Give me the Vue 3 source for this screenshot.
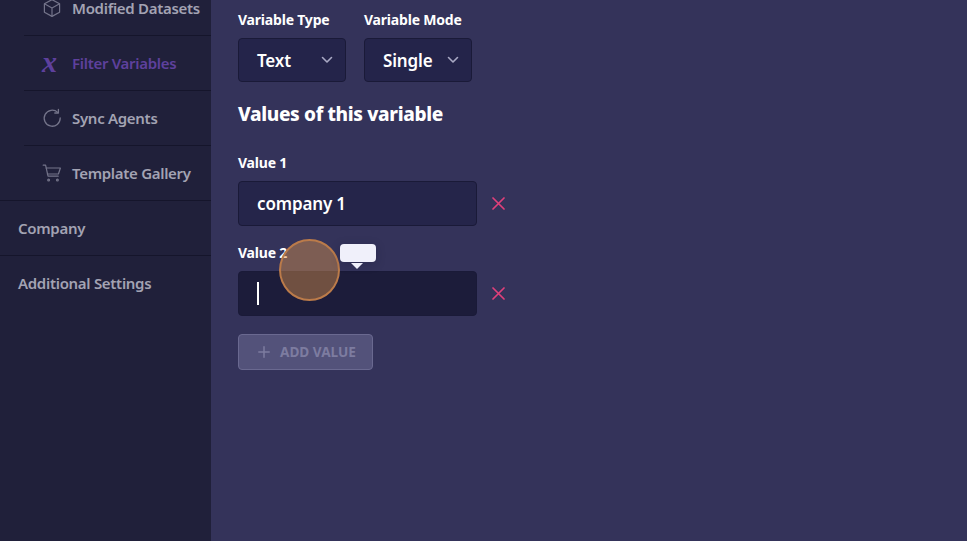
<template>
  <div class="page">
    <aside class="sidebar">
      <div class="sub-list">
        <div v-for="item in subItems" :key="item.label" class="sub-item" :class="{ active: item.active }">
          <span class="sub-icon">
            <span v-if="item.icon === 'x'" class="x-glyph">x</span>
            <svg v-else-if="item.icon === 'box'" width="20" height="20" viewBox="0 0 20 20" fill="none" stroke="currentColor" stroke-width="1.2" stroke-linejoin="round">
              <path d="M10 1.6 17.6 5.8V14.2L10 18.4 2.4 14.2V5.8Z" />
              <path d="M2.4 5.8 10 10 17.6 5.8M10 10V18.4" />
            </svg>
            <svg v-else-if="item.icon === 'sync'" width="20" height="20" viewBox="0 0 20 20" fill="none" stroke="currentColor" stroke-width="1.3" stroke-linecap="round" stroke-linejoin="round">
              <path d="M15.7 4.4A8 8 0 1 0 18.2 10" />
              <path d="M16.4 1.4V5H12.8" />
            </svg>
            <svg v-else width="20" height="20" viewBox="0 0 20 20" fill="none" stroke="currentColor" stroke-width="1.2" stroke-linecap="round" stroke-linejoin="round">
              <path d="M1.2 2.2H3.6L6 13.2H16.2" />
              <path d="M4.2 5H18.4L16.4 11H5.4" />
              <circle cx="6.6" cy="17" r="0.9" />
              <circle cx="15.4" cy="17" r="0.9" />
            </svg>
          </span>
          <span>{{ item.label }}</span>
        </div>
      </div>
      <div class="top-item">Company</div>
      <div class="top-item">Additional Settings</div>
    </aside>

    <main class="content">
      <div class="select-row">
        <div v-for="sel in selects" :key="sel.label" class="select-field">
          <label>{{ sel.label }}</label>
          <div class="select-box">
            <span>{{ sel.value }}</span>
            <svg width="12" height="8" viewBox="0 0 12 8" fill="none" stroke="#a9a9c4" stroke-width="1.6" stroke-linecap="round" stroke-linejoin="round">
              <path d="M1.5 1.5 6 6 10.5 1.5" />
            </svg>
          </div>
        </div>
      </div>

      <h2>Values of this variable</h2>

      <div v-for="(val, i) in values" :key="i" class="value-field">
        <label>Value {{ i + 1 }}</label>
        <div class="value-row">
          <div class="value-input" :class="{ focused: val === '' }">
            <span v-if="val">{{ val }}</span>
            <span v-else class="caret"></span>
          </div>
          <svg class="remove" width="13" height="13" viewBox="0 0 13 13" stroke="#e0407a" stroke-width="1.7" stroke-linecap="round">
            <path d="M1 1 12 12M12 1 1 12" />
          </svg>
        </div>
      </div>

      <button class="add-btn" type="button">
        <svg width="12" height="12" viewBox="0 0 12 12" stroke="#7d7ca0" stroke-width="1.5" stroke-linecap="round">
          <path d="M6 .8V11.2M.8 6H11.2" />
        </svg>
        <span>ADD VALUE</span>
      </button>
    </main>

    <div class="click-ring"></div>
    <div class="tip"></div>
  </div>
</template>

<script setup>
const subItems = [
  { label: 'Modified Datasets', icon: 'box' },
  { label: 'Filter Variables', icon: 'x', active: true },
  { label: 'Sync Agents', icon: 'sync' },
  { label: 'Template Gallery', icon: 'cart' }
]

const selects = [
  { label: 'Variable Type', value: 'Text' },
  { label: 'Variable Mode', value: 'Single' }
]

const values = ['company 1', '']
</script>

<style>
html, body {
  margin: 0;
  background: #34335a;
}
</style>

<style scoped>
.page {
  position: relative;
  display: flex;
  width: 967px;
  height: 541px;
  overflow: hidden;
  background: #34335a;
  font-family: "Noto Sans", "Open Sans", sans-serif;
  color: #fff;
}

.sidebar {
  flex: 0 0 211px;
  margin-top: -19px;
  background: #20203a;
  color: #a3a3b3;
  font-size: 15px;
  font-weight: 600;
  letter-spacing: -0.3px;
}

.sub-list {
  padding-left: 24px;
  border-bottom: 1px solid #15152b;
}

.sub-item {
  display: flex;
  align-items: center;
  height: 54px;
  padding-left: 18px;
  border-bottom: 1px solid #15152b;
}

.sub-item:last-child {
  border-bottom: 0;
}

.sub-item.active {
  color: #5e409d;
}

.sub-icon {
  display: flex;
  justify-content: center;
  width: 20px;
  margin-right: 10px;
  color: #74748a;
}

.active .sub-icon {
  color: #5e409d;
  justify-content: flex-start;
}

.x-glyph {
  font-family: "Liberation Serif", serif;
  font-style: italic;
  font-weight: 700;
  font-size: 30px;
  line-height: 20px;
  letter-spacing: 0;
  margin-top: -3px;
}

.top-item {
  display: flex;
  align-items: center;
  height: 54px;
  padding-left: 18px;
  border-bottom: 1px solid #15152b;
}

.top-item:last-child {
  border-bottom: 0;
}

.content {
  flex: 1;
  padding: 11px 0 0 27px;
}

label {
  display: block;
  font-size: 14px;
  font-weight: 700;
  line-height: 18px;
  letter-spacing: -0.2px;
}

.select-row {
  display: flex;
  gap: 18px;
}

.select-field label {
  margin-bottom: 9px;
}

.select-box {
  display: flex;
  align-items: center;
  justify-content: space-between;
  box-sizing: border-box;
  width: 108px;
  height: 44px;
  padding: 0 12px 0 18px;
  background: #24244a;
  border: 1px solid #1a1a38;
  border-radius: 4px;
  font-size: 17px;
  font-weight: 600;
  letter-spacing: -0.15px;
}

h2 {
  margin: 19px 0 26px;
  font-size: 19px;
  font-weight: 800;
  line-height: 27px;
  letter-spacing: -0.35px;
}

.value-field {
  margin-bottom: 18px;
}

.value-field label {
  margin-bottom: 9px;
}

.value-row {
  display: flex;
  align-items: center;
  gap: 15px;
}

.value-input {
  display: flex;
  align-items: center;
  box-sizing: border-box;
  width: 239px;
  height: 45px;
  padding-left: 18px;
  background: #25254a;
  border: 1px solid #1a1a38;
  border-radius: 4px;
  font-size: 17px;
  font-weight: 600;
  letter-spacing: -0.15px;
}

.value-input.focused {
  background: #1c1c3a;
}

.caret {
  width: 2px;
  height: 23px;
  background: #fff;
}

.add-btn {
  display: flex;
  align-items: center;
  gap: 10px;
  box-sizing: border-box;
  width: 135px;
  height: 36px;
  padding: 0 0 1px 19px;
  background: #53527a;
  border: 1px solid #6a6990;
  border-radius: 4px;
  color: #7d7ca0;
  font-family: inherit;
  font-size: 13.6px;
  font-weight: 700;
}

.click-ring {
  position: absolute;
  left: 279px;
  top: 239px;
  box-sizing: border-box;
  width: 61px;
  height: 62px;
  background: rgba(214, 145, 75, 0.45);
  border: 2px solid #bb7b4a;
  border-radius: 50%;
}

.tip {
  position: absolute;
  left: 340px;
  top: 244px;
  width: 36px;
  height: 18px;
  background: #f0f0fa;
  border-radius: 4px;
  box-shadow: 0 2px 10px rgba(20, 20, 50, 0.25);
}

.tip::after {
  content: "";
  position: absolute;
  left: 11px;
  top: 19px;
  border-left: 6px solid transparent;
  border-right: 6px solid transparent;
  border-top: 6px solid #f0f0fa;
}
</style>
